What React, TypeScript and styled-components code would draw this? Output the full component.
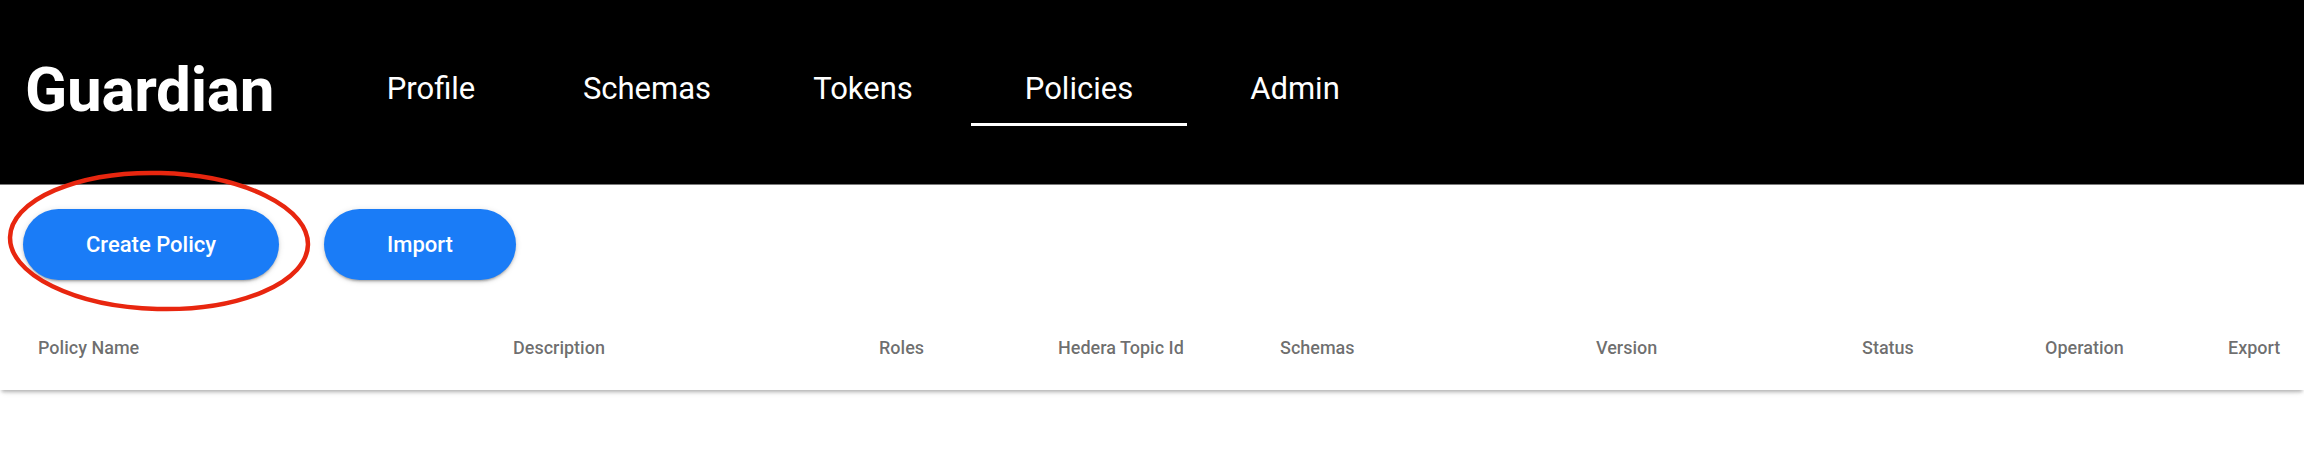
import React from "react";
import styled, { createGlobalStyle } from "styled-components";

const GlobalStyle = createGlobalStyle`
  html, body {
    margin: 0;
    padding: 0;
    background: #ffffff;
    font-family: Roboto, "Liberation Sans", Arial, sans-serif;
  }
  * { box-sizing: border-box; }
`;

const Page = styled.div`
  width: 2304px;
  min-height: 464px;
  background: #fff;
`;

const Header = styled.header`
  height: 185px;
  background: #000;
  border-bottom: 1px solid #7a7a7a;
  display: flex;
  align-items: center;
  padding-left: 25px;
`;

const Logo = styled.div`
  color: #fff;
  font-family: Roboto, "Liberation Sans", sans-serif;
  font-weight: 700;
  font-size: 62px;
  letter-spacing: -0.3px;
  width: 298px;
  margin-top: -6px;
`;

const Nav = styled.nav`
  display: flex;
  height: 72px;
  align-self: flex-start;
  margin-top: 54px;
`;

const Tab = styled.a<{ $active?: boolean }>`
  width: 216px;
  height: 72px;
  display: flex;
  align-items: center;
  justify-content: center;
  color: #fff;
  font-size: 31px;
  font-weight: 400;
  text-decoration: none;
  border-bottom: 3px solid ${(p) => (p.$active ? "#fff" : "transparent")};
`;

const Toolbar = styled.div`
  position: relative;
  display: flex;
  gap: 45px;
  padding: 24px 0 0 23px;
`;

const Button = styled.button`
  height: 71px;
  padding: 0 63px;
  border: none;
  border-radius: 36px;
  background: #1a7cf7;
  color: #fff;
  font-family: Roboto, "Liberation Sans", sans-serif;
  font-size: 22px;
  font-weight: 500;
  box-shadow: 0 3px 2px -2px rgba(0, 0, 0, 0.2), 0 2px 3px 0 rgba(0, 0, 0, 0.14),
    0 1px 6px 0 rgba(0, 0, 0, 0.12);
  cursor: pointer;
`;

const Annotation = styled.svg`
  position: absolute;
  left: 0;
  top: 0;
  pointer-events: none;
  overflow: visible;
`;

const TableCard = styled.div`
  margin-top: 26px;
  height: 84px;
  background: #fff;
  box-shadow: 0 4px 3px -2px rgba(0, 0, 0, 0.16), 0 3px 4px -1px rgba(0, 0, 0, 0.1),
    0 4px 8px -3px rgba(0, 0, 0, 0.1);
`;

const HeaderRow = styled.div`
  display: grid;
  grid-template-columns: 475px 366px 179px 222px 316px 266px 183px 183px 1fr;
  align-items: center;
  height: 84px;
  padding-left: 38px;
`;

const HeaderCell = styled.div`
  color: rgba(0, 0, 0, 0.58);
  font-size: 18px;
  font-weight: 500;
  white-space: nowrap;
  margin-top: -2px;
`;

const tabs = ["Profile", "Schemas", "Tokens", "Policies", "Admin"];
const columns = [
  "Policy Name",
  "Description",
  "Roles",
  "Hedera Topic Id",
  "Schemas",
  "Version",
  "Status",
  "Operation",
  "Export",
];

export default function App() {
  return (
    <Page>
      <GlobalStyle />
      <Header>
        <Logo>Guardian</Logo>
        <Nav>
          {tabs.map((t) => (
            <Tab key={t} $active={t === "Policies"}>
              {t}
            </Tab>
          ))}
        </Nav>
      </Header>
      <Toolbar>
        <Button>Create Policy</Button>
        <Button>Import</Button>
        <Annotation width="320" height="150">
          <ellipse
            cx="159"
            cy="56"
            rx="149"
            ry="68"
            fill="none"
            stroke="#e8260f"
            strokeWidth="4.5"
            transform="rotate(1.5 159 56)"
          />
        </Annotation>
      </Toolbar>
      <TableCard>
        <HeaderRow>
          {columns.map((c) => (
            <HeaderCell key={c}>{c}</HeaderCell>
          ))}
        </HeaderRow>
      </TableCard>
    </Page>
  );
}
